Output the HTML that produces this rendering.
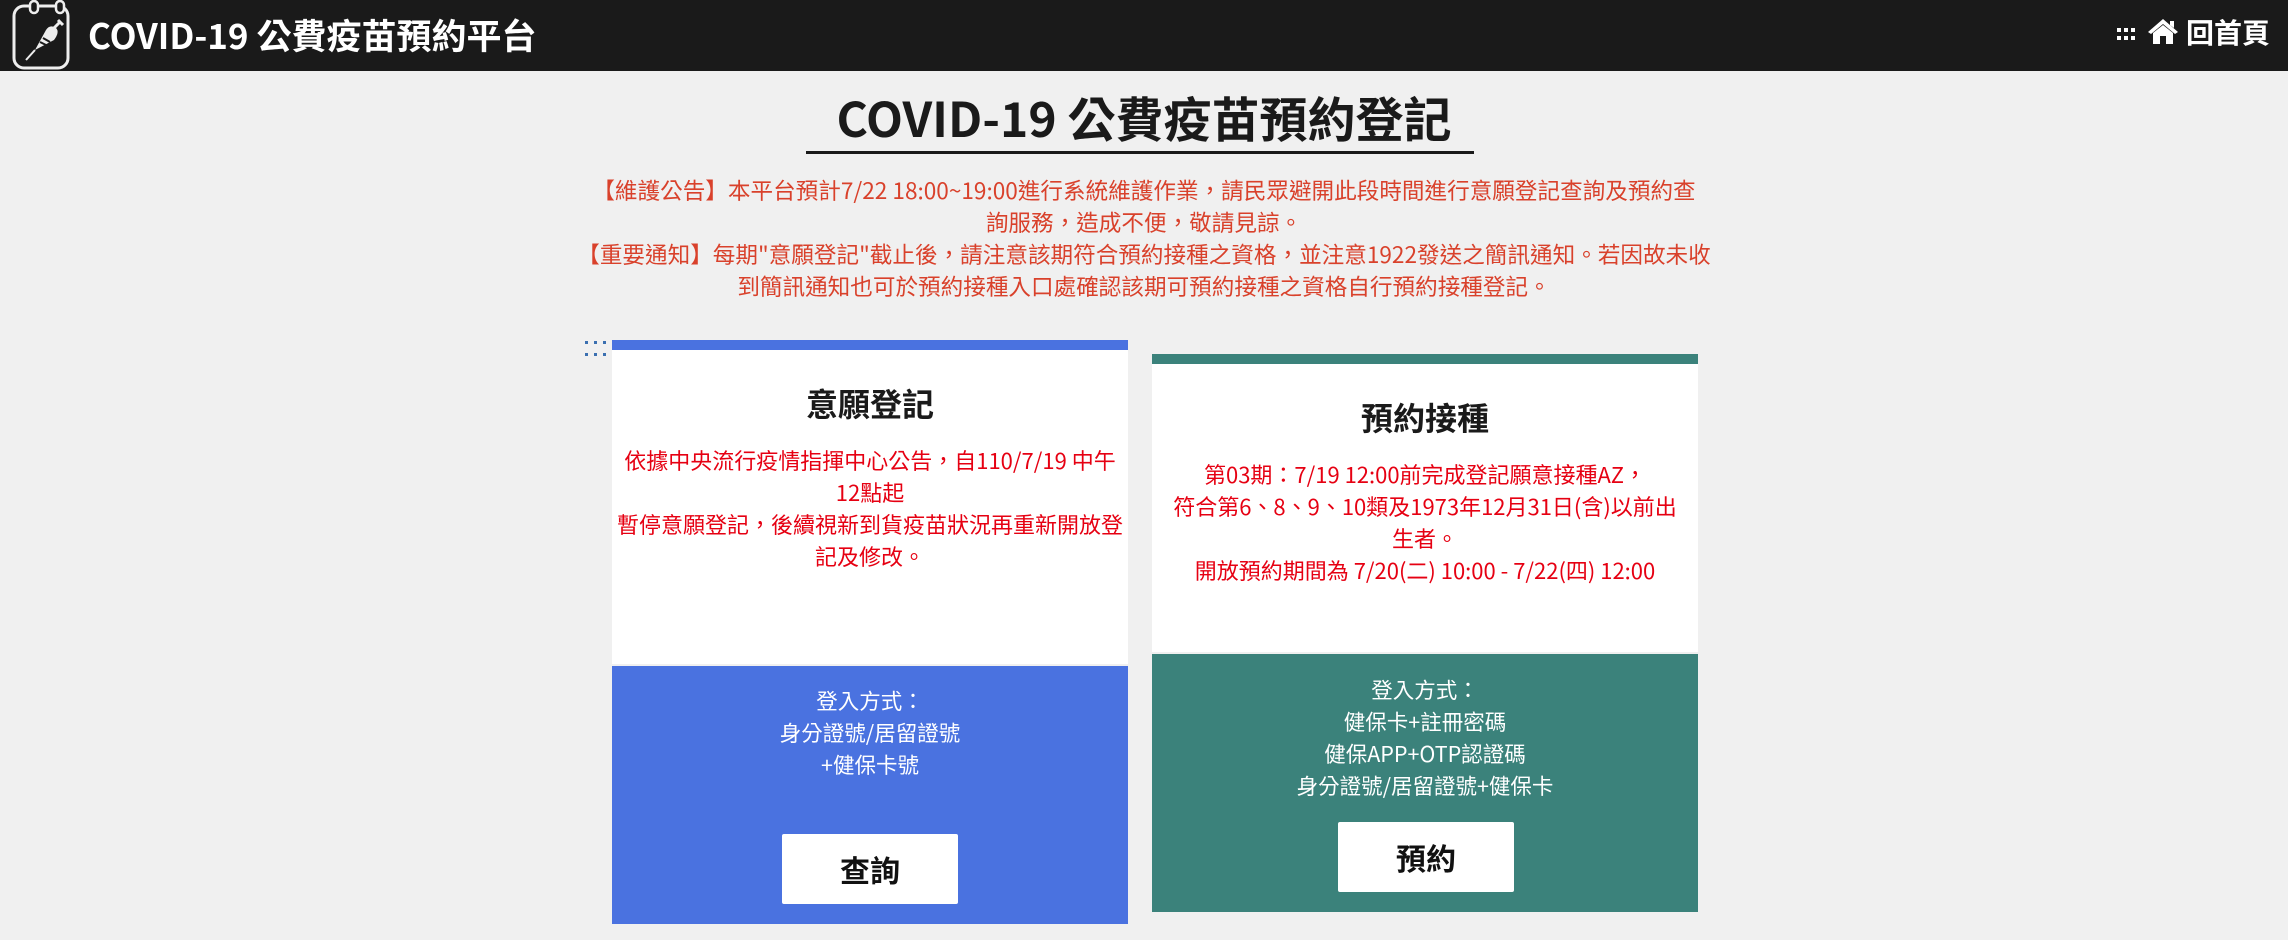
<!DOCTYPE html>
<html><head><meta charset="utf-8"><style>
*{margin:0;padding:0;box-sizing:border-box}
body{width:2288px;height:940px;background:#f0f0f0;font-family:"Noto Sans CJK TC","Liberation Sans",sans-serif;position:relative;overflow:hidden}
.hdr{position:absolute;left:0;top:0;width:2288px;height:71px;background:#1a1a1a}
.abs{position:absolute}
.t{position:absolute;white-space:nowrap;text-align:center}
.red{color:#d9412b;font-size:22.6px;line-height:32px}
.cr{color:#e60012;font-size:22px;line-height:32px}
.wt{color:#fff;font-size:21.5px;line-height:32px}
.btn{position:absolute;background:#fff;border-radius:2px;font-weight:bold;font-size:30px;color:#111;display:flex;align-items:center;justify-content:center}
.dot{position:absolute;width:3px;height:3px;background:#3a6fb0}
</style></head><body>
<div class="hdr"></div>
<svg class="abs" style="left:10px;top:0" width="62" height="71" viewBox="0 0 62 71">
<rect x="4" y="6" width="54" height="62" rx="10" fill="none" stroke="#eee" stroke-width="3"/>
<rect x="20" y="1" width="8" height="12" rx="4" fill="#1a1a1a" stroke="#eee" stroke-width="2.5"/>
<rect x="46" y="1" width="8" height="12" rx="4" fill="#1a1a1a" stroke="#eee" stroke-width="2.5"/>
<path d="M25 50 L36 30 Q40 24 46 28 Q50 32 44 40 Z" fill="#eee"/>
<path d="M25 50 L16 60" stroke="#eee" stroke-width="2"/>
<path d="M44 28 L50 22 M48 20 L53 25" stroke="#eee" stroke-width="3"/>
<path d="M30 42 L38 46 M33 38 L40 42" stroke="#1a1a1a" stroke-width="2"/>
</svg>
<div class="t" style="left:88px;top:12px;color:#fff;font-weight:bold;font-size:35px;line-height:46px">COVID-19 公費疫苗預約平台</div>
<div class="dot" style="background:#fff;left:2117px;top:28px;width:4px;height:4px"></div>
<div class="dot" style="background:#fff;left:2124px;top:28px;width:4px;height:4px"></div>
<div class="dot" style="background:#fff;left:2131px;top:28px;width:4px;height:4px"></div>
<div class="dot" style="background:#fff;left:2117px;top:36px;width:4px;height:4px"></div>
<div class="dot" style="background:#fff;left:2124px;top:36px;width:4px;height:4px"></div>
<div class="dot" style="background:#fff;left:2131px;top:36px;width:4px;height:4px"></div>
<svg class="abs" style="left:2147px;top:18px" width="32" height="26" viewBox="0 0 32 26"><path d="M16 1 L31 14 L28 16 L16 6 L4 16 L1 14 Z M23 3 h4 v7 l-4-3z" fill="#fff"/><path d="M6 15 L16 7 L26 15 V26 H19 V18 H13 V26 H6 Z" fill="#fff"/></svg>
<div class="t" style="left:2186px;top:12px;color:#fff;font-weight:bold;font-size:28px;line-height:40px">回首頁</div>

<div class="t" style="left:0;width:2288px;top:83px;font-size:48px;font-weight:bold;color:#1a1a1a;line-height:66px">COVID-19 公費疫苗預約登記</div>
<div class="abs" style="left:806px;top:151px;width:668px;height:3px;background:#1a1a1a"></div>
<div class="t red" style="left:0;width:2288px;top:174px">【維護公告】本平台預計7/22 18:00~19:00進行系統維護作業，請民眾避開此段時間進行意願登記查詢及預約查<br>詢服務，造成不便，敬請見諒。<br>【重要通知】每期"意願登記"截止後，請注意該期符合預約接種之資格，並注意1922發送之簡訊通知。若因故未收<br>到簡訊通知也可於預約接種入口處確認該期可預約接種之資格自行預約接種登記。</div>

<div class="dot" style="left:585px;top:341px"></div><div class="dot" style="left:594px;top:341px"></div><div class="dot" style="left:603px;top:341px"></div>
<div class="dot" style="left:585px;top:353px"></div><div class="dot" style="left:594px;top:353px"></div><div class="dot" style="left:603px;top:353px"></div>

<div class="abs" style="left:612px;top:340px;width:516px;height:10px;background:#4a72e0"></div>
<div class="abs" style="left:612px;top:350px;width:516px;height:314px;background:#fff"></div>
<div class="abs" style="left:612px;top:666px;width:516px;height:258px;background:#4a72e0"></div>
<div class="t" style="left:612px;width:516px;top:380px;font-size:32px;font-weight:bold;color:#1a1a1a;line-height:46px">意願登記</div>
<div class="t cr" style="left:612px;width:516px;top:444px">依據中央流行疫情指揮中心公告，自110/7/19 中午<br>12點起<br>暫停意願登記，後續視新到貨疫苗狀況再重新開放登<br>記及修改。</div>
<div class="t wt" style="left:612px;width:516px;top:685px">登入方式：<br>身分證號/居留證號<br>+健保卡號</div>
<div class="btn" style="left:782px;top:834px;width:176px;height:70px">查詢</div>

<div class="abs" style="left:1152px;top:354px;width:546px;height:10px;background:#3b827b"></div>
<div class="abs" style="left:1152px;top:364px;width:546px;height:288px;background:#fff"></div>
<div class="abs" style="left:1152px;top:654px;width:546px;height:258px;background:#3b827b"></div>
<div class="t" style="left:1152px;width:546px;top:394px;font-size:32px;font-weight:bold;color:#1a1a1a;line-height:46px">預約接種</div>
<div class="t cr" style="left:1152px;width:546px;top:458px">第03期：7/19 12:00前完成登記願意接種AZ，<br>符合第6、8、9、10類及1973年12月31日(含)以前出<br>生者。<br>開放預約期間為 7/20(二) 10:00 - 7/22(四) 12:00</div>
<div class="t wt" style="left:1152px;width:546px;top:674px">登入方式：<br>健保卡+註冊密碼<br>健保APP+OTP認證碼<br>身分證號/居留證號+健保卡</div>
<div class="btn" style="left:1338px;top:822px;width:176px;height:70px">預約</div>
</body></html>
